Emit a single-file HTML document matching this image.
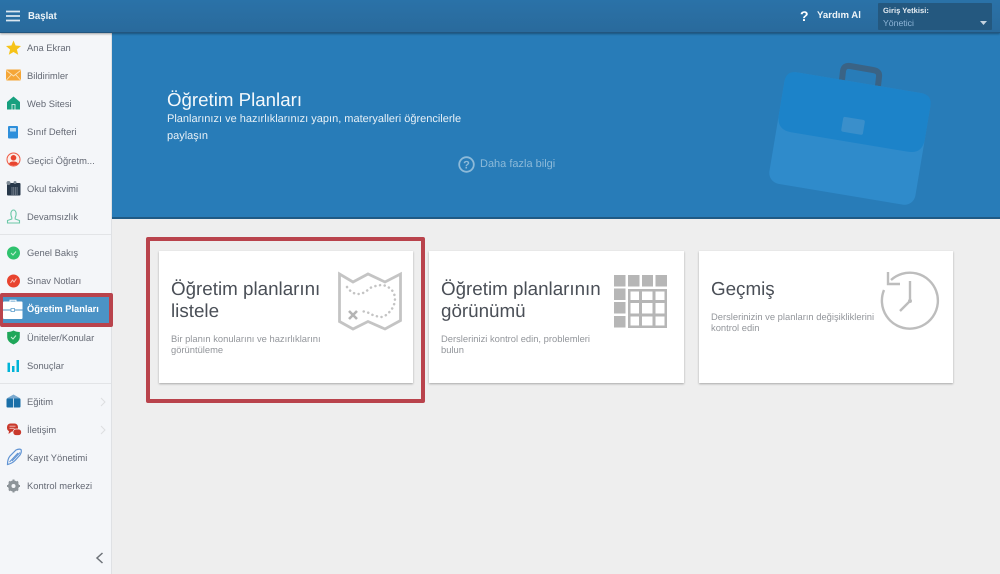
<!DOCTYPE html>
<html><head><meta charset="utf-8">
<style>
*{box-sizing:border-box}
html,body{margin:0;padding:0;width:1000px;height:574px;overflow:hidden;background:#eeeeee;font-family:"Liberation Sans",sans-serif;text-rendering:geometricPrecision}
.abs,.t{position:absolute}
.t{white-space:nowrap}
#top{position:absolute;left:0;top:0;width:1000px;height:33px;background:linear-gradient(#2a72a8,#296a9c);border-bottom:1px solid #22567f;box-shadow:0 1px 2px rgba(0,0,0,.35);z-index:5}
#hero{position:absolute;left:112px;top:33px;width:888px;height:186px;background:#287cb8;border-bottom:2px solid #1f5a85}
#side{position:absolute;left:0;top:33px;width:112px;height:541px;background:#f4f6f9;border-right:1px solid #dfe1e4;z-index:3}
.m{position:absolute;left:27px;font-size:9.4px;color:#656a75;white-space:nowrap;line-height:12px;z-index:4}
.ic{position:absolute;left:5px;width:18px;height:18px;z-index:4;overflow:visible}
.card{position:absolute;top:251px;height:132px;background:#fff;box-shadow:0 1px 2px rgba(0,0,0,.3)}
.h{position:absolute;font-size:18.8px;line-height:22px;color:#4a4f57;white-space:nowrap}
.s{position:absolute;font-size:9.4px;line-height:11px;color:#93969b;white-space:nowrap}
.sep{position:absolute;left:0;width:111px;height:1px;background:#e2e4e7;z-index:4}
</style></head><body>
<div id="top"></div>
<svg class="abs" style="left:6px;top:10px;z-index:6" width="14" height="12"><path d="M0 1.500H14M0 6H14M0 10.500H14" stroke="#dbe7f0" stroke-width="1.700"/></svg>
<div class="t" style="left:28px;top:11px;font-size:10px;line-height:12px;color:#eef4f8;font-weight:bold;z-index:6;transform:scaleX(.96);transform-origin:0 0">Başlat</div>
<div class="t" style="left:800px;top:8px;font-size:14px;line-height:17px;font-weight:bold;color:#fff;z-index:6">?</div>
<div class="t" style="left:817px;top:10px;font-size:9.6px;line-height:12px;font-weight:bold;color:#eef4f8;z-index:6">Yardım Al</div>
<div class="abs" style="left:878px;top:3px;width:114px;height:27px;background:#24587f;border-radius:1px;z-index:6"></div>
<div class="t" style="left:883px;top:6px;font-size:7.6px;line-height:10px;font-weight:bold;color:#e6edf3;z-index:7">Giriş Yetkisi:</div>
<div class="t" style="left:883px;top:18px;font-size:8.7px;line-height:11px;color:#8eb5d8;z-index:7">Yönetici</div>
<svg class="abs" style="left:980px;top:21px;z-index:7" width="8" height="5"><path d="M0 0H7L3.500 4Z" fill="#c5d3df"/></svg>

<div id="hero"></div>
<svg class="abs" style="left:760px;top:55px" width="180" height="165" viewBox="760 55 180 165">
<path d="M842 80L843 71Q844 65 850 66L873 70Q880 71 879 77L878 86" fill="none" stroke="#3a6385" stroke-width="6"/>
<g transform="rotate(9.500 850 138)">
<rect x="776" y="82" width="148" height="113" rx="11" fill="#2f8bcb"/>
<path d="M776 93Q776 82 787 82H913Q924 82 924 93V127Q924 142 909 142H791Q776 142 776 127Z" fill="#1c83c9"/>
<rect x="840" y="118" width="22" height="15" rx="2" fill="#3a8fcb"/>
</g></svg>
<div class="t" style="left:167px;top:89px;font-size:18.7px;line-height:22px;color:#f4f8fb">Öğretim Planları</div>
<div class="t" style="left:167px;top:111px;font-size:11px;line-height:17px;color:#e8f1f7;white-space:normal;width:310px">Planlarınızı ve hazırlıklarınızı yapın, materyalleri öğrencilerle paylaşın</div>
<svg class="abs" style="left:458px;top:156px" width="17" height="17"><circle cx="8.500" cy="8.500" r="7.300" fill="none" stroke="#8dbad9" stroke-width="1.800"/><text x="8.500" y="12.500" font-family="Liberation Sans" font-size="11" font-weight="bold" fill="#8dbad9" text-anchor="middle">?</text></svg>
<div class="t" style="left:480px;top:158px;font-size:11px;line-height:13px;color:#8dbad9">Daha fazla bilgi</div>

<div id="side"></div>
<div class="sep" style="top:234px"></div>
<div class="sep" style="top:383px"></div>

<svg class="ic" style="top:38px" viewBox="0 0 18 18"><path d="M8.500 2.500L10.600 7.500 16 8 11.900 11.500 13.200 16.800 8.500 14 3.800 16.800 5.100 11.500 1 8 6.400 7.500Z" fill="#f6c318"/></svg>
<div class="m" style="top:42px">Ana Ekran</div>
<svg class="ic" style="top:66px" viewBox="0 0 18 18"><rect x="1" y="3.500" width="15" height="11" rx="1" fill="#f5a637"/><path d="M1.500 4.500L8.500 10 15.500 4.500M1.500 14L6.500 8.500M15.500 14L10.500 8.500" fill="none" stroke="#fbe3b8" stroke-width=".9"/></svg>
<div class="m" style="top:70px">Bildirimler</div>
<svg class="ic" style="top:94px" viewBox="0 0 18 18"><path d="M8.500 2.500L15 8V15.500H2V8Z" fill="#17a07f"/><rect x="6.500" y="10" width="4" height="5.500" fill="#bfe5da"/><rect x="7.500" y="11" width="2" height="4.500" fill="#17a07f"/></svg>
<div class="m" style="top:98px">Web Sitesi</div>
<svg class="ic" style="top:122px" viewBox="0 0 18 18"><rect x="3" y="4" width="10" height="12.500" rx="1" fill="#2e8fdb"/><rect x="5" y="6" width="6" height="3.500" fill="#bcdcf3"/></svg>
<div class="m" style="top:126px">Sınıf Defteri</div>
<svg class="ic" style="top:151px" viewBox="0 0 18 18"><circle cx="8.500" cy="8.500" r="6.500" fill="#fbeee9" stroke="#ee5a45" stroke-width="1"/><circle cx="8.500" cy="6.800" r="2.800" fill="#e8442f"/><path d="M4 13Q4.500 10.500 8.500 10.500T13 13Q11 14.500 8.500 14.500T4 13Z" fill="#e8442f"/></svg>
<div class="m" style="top:155px">Geçici Öğretm...</div>
<svg class="ic" style="top:179px" viewBox="0 0 18 18"><rect x="2" y="4" width="13.500" height="12.500" rx="1" fill="#28384a"/><circle cx="3.500" cy="4" r="2" fill="#7f8b96"/><circle cx="10" cy="3.500" r="1.500" fill="#7f8b96"/><path d="M6.500 9H13M6.500 11H13M6.500 13H13M6.500 15H13" stroke="#b8c0c8" stroke-width="1" stroke-dasharray="1 .7"/></svg>
<div class="m" style="top:183px">Okul takvimi</div>
<svg class="ic" style="top:207px" viewBox="0 0 18 18"><path d="M6.800 10.500Q5.500 8 6 5.500Q6.800 3 8.500 3T11 5.500Q11.500 8 10.200 10.500V12L14.500 13.500V16H2.500V13.500L6.800 12Z" fill="none" stroke="#6bc8a8" stroke-width="1.100"/></svg>
<div class="m" style="top:211px">Devamsızlık</div>

<svg class="ic" style="top:244px" viewBox="0 0 18 18"><circle cx="8.500" cy="9" r="6.500" fill="#2fc26e"/><path d="M6 9L8 11 11 7.500" fill="none" stroke="#c7efd6" stroke-width="1"/></svg>
<div class="m" style="top:247px">Genel Bakış</div>
<svg class="ic" style="top:272px" viewBox="0 0 18 18"><circle cx="8.500" cy="9" r="6.500" fill="#e8442f"/><path d="M5.500 11L7.500 8 9 10 11.500 6.500" fill="none" stroke="#f9c5bd" stroke-width="1"/></svg>
<div class="m" style="top:275px">Sınav Notları</div>

<div class="abs" style="left:0;top:293px;width:113px;height:34px;background:#b9434c;border-radius:2px;z-index:4"></div>
<div class="abs" style="left:3px;top:297px;width:106px;height:26px;background:#4b93c6;z-index:4"></div>
<svg class="abs" style="left:3px;top:298px;z-index:5" width="20" height="22" viewBox="0 0 20 22"><path d="M7 4V2.200H13V4" fill="none" stroke="#fff" stroke-width="1"/><rect x="0" y="3.500" width="19.500" height="17.500" rx="1" fill="#fff"/><path d="M0 12H19.500" stroke="#4b93c6" stroke-width="1"/><rect x="8" y="10.500" width="3.500" height="3" fill="#fff" stroke="#4b93c6" stroke-width=".7"/></svg>
<div class="m" style="top:304px;color:#fff;font-weight:bold;z-index:5;font-size:9.6px;transform:scaleX(.97);transform-origin:0 0">Öğretim Planları</div>

<svg class="ic" style="top:328px" viewBox="0 0 18 18"><path d="M8.500 2.500Q11 4 14.800 4V9.500Q14.500 14 8.500 16.500Q2.500 14 2.200 9.500V4Q6 4 8.500 2.500Z" fill="#1fa75a"/><path d="M6 9L8 11 11 7.500" fill="none" stroke="#c7efd6" stroke-width="1"/></svg>
<div class="m" style="top:332px">Üniteler/Konular</div>
<svg class="ic" style="top:356px" viewBox="0 0 18 18"><rect x="2.500" y="6.700" width="2.500" height="9.300" fill="#00b4d8"/><rect x="7" y="10" width="2.500" height="6" fill="#00b4d8"/><rect x="11.500" y="4" width="2.500" height="12" fill="#00b4d8"/></svg>
<div class="m" style="top:360px">Sonuçlar</div>

<svg class="ic" style="top:392px" viewBox="0 0 18 18"><path d="M1.500 6.500L8.500 2.500 15.500 6.500Z" fill="#7aa9cf"/><rect x="1.500" y="6.500" width="14" height="9" rx="1" fill="#1a6fa8"/><path d="M8.500 6.500V15.500" stroke="#bcd6ea" stroke-width="1"/></svg>
<div class="m" style="top:396px">Eğitim</div>
<svg class="ic" style="top:420px" viewBox="0 0 18 18"><rect x="2" y="3.500" width="11" height="8" rx="3.500" fill="#c9392c"/><path d="M4 11L3.500 14 7.500 11Z" fill="#c9392c"/><rect x="8" y="9" width="8.500" height="6.500" rx="3" fill="#c9392c" stroke="#f4f6f9" stroke-width=".7"/><path d="M4.500 6.200H10.500M4.500 8.300H9.500" stroke="#f0c4bf" stroke-width=".8"/></svg>
<div class="m" style="top:424px">İletişim</div>
<svg class="abs" style="left:100px;top:397px;z-index:4" width="6" height="10"><path d="M1 1L5 5 1 9" fill="none" stroke="#dcdee0" stroke-width="1"/></svg>
<svg class="abs" style="left:100px;top:425px;z-index:4" width="6" height="10"><path d="M1 1L5 5 1 9" fill="none" stroke="#dcdee0" stroke-width="1"/></svg>
<svg class="ic" style="top:448px;left:6px" viewBox="0 0 18 18"><path d="M1.500 16.500Q1.500 11 4 8L10 2Q13 0.500 15 1.500Q16 4 14 7L9 12.500Q6 15.500 1.500 16.500Z" fill="none" stroke="#5f93d3" stroke-width="1.200"/><path d="M3.500 14L12 5M6 13L14 4.500" stroke="#5f93d3" stroke-width="1"/></svg>
<div class="m" style="top:452px">Kayıt Yönetimi</div>
<svg class="ic" style="top:476px" viewBox="0 0 18 18"><circle cx="8.500" cy="10" r="4" fill="none" stroke="#8d9499" stroke-width="3"/><path d="M8.500 3.500V16.500M2 10H15M4 5.500L13 14.500M13 5.500L4 14.500" stroke="#8d9499" stroke-width="2"/><circle cx="8.500" cy="10" r="2" fill="#f4f6f9"/></svg>
<div class="m" style="top:480px">Kontrol merkezi</div>
<svg class="abs" style="left:95px;top:552px;z-index:4" width="9" height="12"><path d="M7.500 1L2 6 7.500 11" fill="none" stroke="#6d7278" stroke-width="1.500"/></svg>

<div class="abs" style="left:146px;top:237px;width:279px;height:166px;border:4px solid #b9434c;border-radius:2px"></div>
<div class="card" style="left:159px;width:254px"></div>
<div class="card" style="left:429px;width:255px"></div>
<div class="card" style="left:699px;width:254px"></div>

<div class="h" style="left:171px;top:278px">Öğretim planlarını<br>listele</div>
<div class="s" style="left:171px;top:333px">Bir planın konularını ve hazırlıklarını<br>görüntüleme</div>
<svg class="abs" style="left:336px;top:270px" width="68" height="62" viewBox="336 270 68 62">
<path d="M339.500 274L353 282 368 274 385 282 400.500 274V320.500L385 329 368 321.500 353 329 339.500 321.500Z" fill="none" stroke="#c4c4c4" stroke-width="2.800"/>
<path d="M347 287Q352 294 358 294T370 288Q377 285 383 285Q394 288 395 298Q395 310 383 317Q375 317 367 312L361 311" fill="none" stroke="#c4c4c4" stroke-width="2.500" stroke-linecap="round" stroke-dasharray="0.100 4.600"/>
<path d="M349 311L357 319M357 311L349 319" stroke="#b5b5b5" stroke-width="2.600"/></svg>

<div class="h" style="left:441px;top:278px">Öğretim planlarının<br>görünümü</div>
<div class="s" style="left:441px;top:333px">Derslerinizi kontrol edin, problemleri<br>bulun</div>
<svg class="abs" style="left:613px;top:274px" width="55" height="55" viewBox="0 0 55 55" fill="#b6b6b6">
<rect x="1" y="1" width="11.500" height="11.500"/><rect x="15" y="1" width="11.500" height="11.500"/><rect x="29" y="1" width="11" height="11.500"/><rect x="42.500" y="1" width="11.500" height="11.500"/>
<rect x="1" y="14.500" width="11.500" height="11.500"/><rect x="1" y="28" width="11.500" height="11.500"/><rect x="1" y="42" width="11.500" height="11.500"/>
<path d="M15 15H54V54H15Z M17.500 17.500V26H26V17.500Z M29 17.500V26H39.500V17.500Z M42.500 17.500V26H51.500V17.500Z M17.500 29V39.500H26V29Z M29 29V39.500H39.500V29Z M42.500 29V39.500H51.500V29Z M17.500 42.500V51.500H26V42.500Z M29 42.500V51.500H39.500V42.500Z M42.500 42.500V51.500H51.500V42.500Z" fill-rule="evenodd"/></svg>

<div class="h" style="left:711px;top:278px">Geçmiş</div>
<div class="s" style="left:711px;top:311px">Derslerinizin ve planların değişikliklerini<br>kontrol edin</div>
<svg class="abs" style="left:878px;top:268px" width="64" height="64" viewBox="878 268 64 64" fill="none" stroke="#bdbdbd">
<path d="M891 280A28 28 0 1 1 884 290" stroke-width="2.400"/>
<path d="M888 272V284H900" stroke-width="2.400"/>
<path d="M910 281V301L900 311" stroke-width="2.400"/><circle cx="910" cy="301" r="1.500" fill="#bdbdbd"/></svg>
</body></html>
